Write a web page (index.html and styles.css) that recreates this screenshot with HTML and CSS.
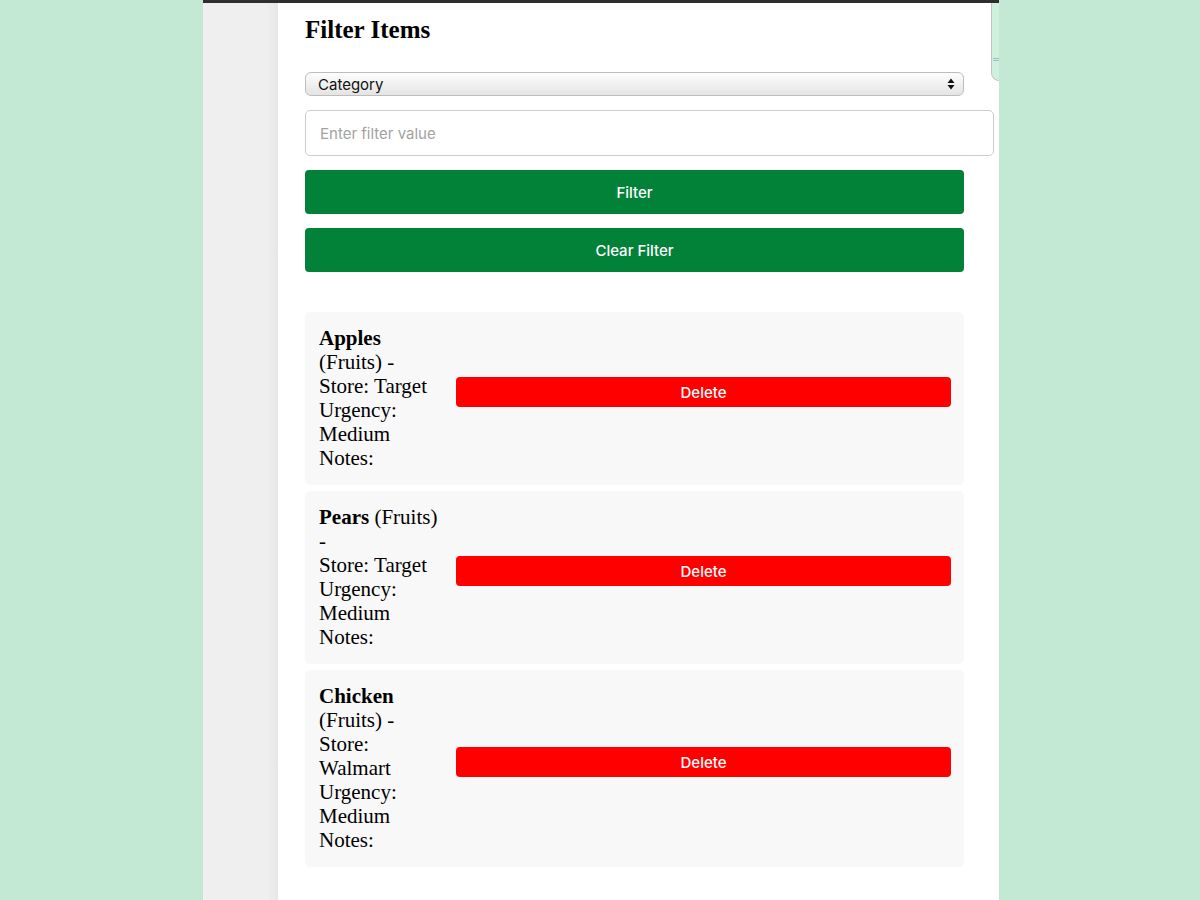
FILE: index.html
```html
<!DOCTYPE html>
<html lang="en">
<head>
<meta charset="utf-8">
<title>Filter Items</title>
<link rel="stylesheet" href="styles.css">
</head>
<body>
<div class="frame">
  <div class="topbar"></div>
  <div class="window">
    <div class="sidebar"></div>
    <main class="main">
      <h1 class="title">Filter Items</h1>
      <select class="select">
        <option>Category</option>
      </select>
      <input class="field" type="text" placeholder="Enter filter value">
      <button class="btn btn-green">Filter</button>
      <button class="btn btn-green">Clear Filter</button>
      <ul class="list">
        <li class="card">
          <div class="card-text"><strong>Apples</strong> (Fruits) -<br>Store: Target<br>Urgency: Medium<br>Notes:</div>
          <button class="btn-delete">Delete</button>
        </li>
        <li class="card">
          <div class="card-text"><strong>Pears</strong> (Fruits) -<br>Store: Target<br>Urgency: Medium<br>Notes:</div>
          <button class="btn-delete">Delete</button>
        </li>
        <li class="card">
          <div class="card-text"><strong>Chicken</strong> (Fruits) -<br>Store: Walmart<br>Urgency: Medium<br>Notes:</div>
          <button class="btn-delete">Delete</button>
        </li>
      </ul>
    </main>
    <div class="corner-panel"><span class="grip"></span></div>
  </div>
</div>
</body>
</html>
```

FILE: styles.css
```css
* { box-sizing: border-box; }

body {
  margin: 0;
  background: #c3e9d4;
  font-family: "Liberation Serif", "Times New Roman", serif;
  overflow: hidden;
}

.frame {
  margin-left: 203px;
  width: 796px;
  height: 900px;
  display: flex;
  flex-direction: column;
}

.topbar {
  height: 3px;
  background: #2d2f2e;
  flex: none;
}

.window {
  flex: 1;
  display: flex;
  position: relative;
}

.sidebar {
  width: 75px;
  flex: none;
  background: linear-gradient(to right, #efefef 0, #efefef 85%, #e6e6e6 100%);
}

.main {
  flex: 1;
  background: #ffffff;
  padding: 12px 0 0 27px;
}

.title {
  margin: 0;
  font-size: 25px;
  font-weight: bold;
  line-height: 30px;
  color: #000;
}

.select {
  display: block;
  margin-top: 27px;
  width: 659px;
  height: 24px;
  -webkit-appearance: none;
  appearance: none;
  border: 1px solid #bdbdbd;
  border-radius: 6px;
  padding: 0 0 0 12px;
  font-family: "Inter", "Liberation Sans", sans-serif;
  font-size: 15px;
  color: #111;
  background-color: #f0f0f0;
  background-image:
    url("data:image/svg+xml;utf8,<svg xmlns='http://www.w3.org/2000/svg' width='8' height='12' viewBox='0 0 8 12'><path d='M4 0.5 L7.5 5 L0.5 5 Z M4 11.5 L7.5 7 L0.5 7 Z' fill='%23111'/></svg>"),
    linear-gradient(to bottom, #fdfdfd 0%, #f2f2f2 45%, #e4e4e4 100%);
  background-repeat: no-repeat, no-repeat;
  background-position: right 8px center, 0 0;
  background-size: 8px 12px, 100% 100%;
}

.field {
  display: block;
  margin-top: 14px;
  width: 689px;
  height: 46px;
  border: 1px solid #cccccc;
  border-radius: 5px;
  padding: 0 14px;
  font-family: "Inter", "Liberation Sans", sans-serif;
  font-size: 15px;
  color: #111;
  background: #fff;
}

.field::placeholder { color: #a3a3a3; }

.btn {
  display: block;
  width: 659px;
  height: 44px;
  margin-top: 14px;
  border: none;
  border-radius: 4px;
  font-family: "Inter", "Liberation Sans", sans-serif;
  font-size: 15px;
  font-weight: 500;
  color: #ffffff;
  cursor: pointer;
}

.btn-green { background: #028139; }

.list {
  list-style: none;
  margin: 40px 0 0 0;
  padding: 0;
  width: 659px;
  display: flex;
  flex-direction: column;
  gap: 6px;
}

.card {
  background: #f8f8f8;
  border-radius: 5px;
  padding: 14px 13px 15px 14px;
  display: flex;
  align-items: center;
}

.card-text {
  width: 123px;
  flex: none;
  margin-right: 14px;
  font-size: 21px;
  line-height: 24px;
  color: #000;
}

.btn-delete {
  flex: 1;
  height: 30px;
  margin-bottom: 12px;
  border: none;
  border-radius: 4px;
  background: #ff0000;
  color: #fff;
  font-family: "Inter", "Liberation Sans", sans-serif;
  font-size: 15px;
  font-weight: 500;
}

.corner-panel {
  position: absolute;
  top: 0;
  right: 0;
  width: 8px;
  height: 78px;
  background: #d0f0de;
  border-left: 1px solid #c4c4c4;
  border-bottom: 1px solid #c4c4c4;
  border-bottom-left-radius: 8px;
}

.grip {
  position: absolute;
  left: 1px;
  top: 55px;
  width: 6px;
  height: 3px;
  border-top: 1px solid #a8b8c8;
  border-bottom: 1px solid #a8b8c8;
}
```
